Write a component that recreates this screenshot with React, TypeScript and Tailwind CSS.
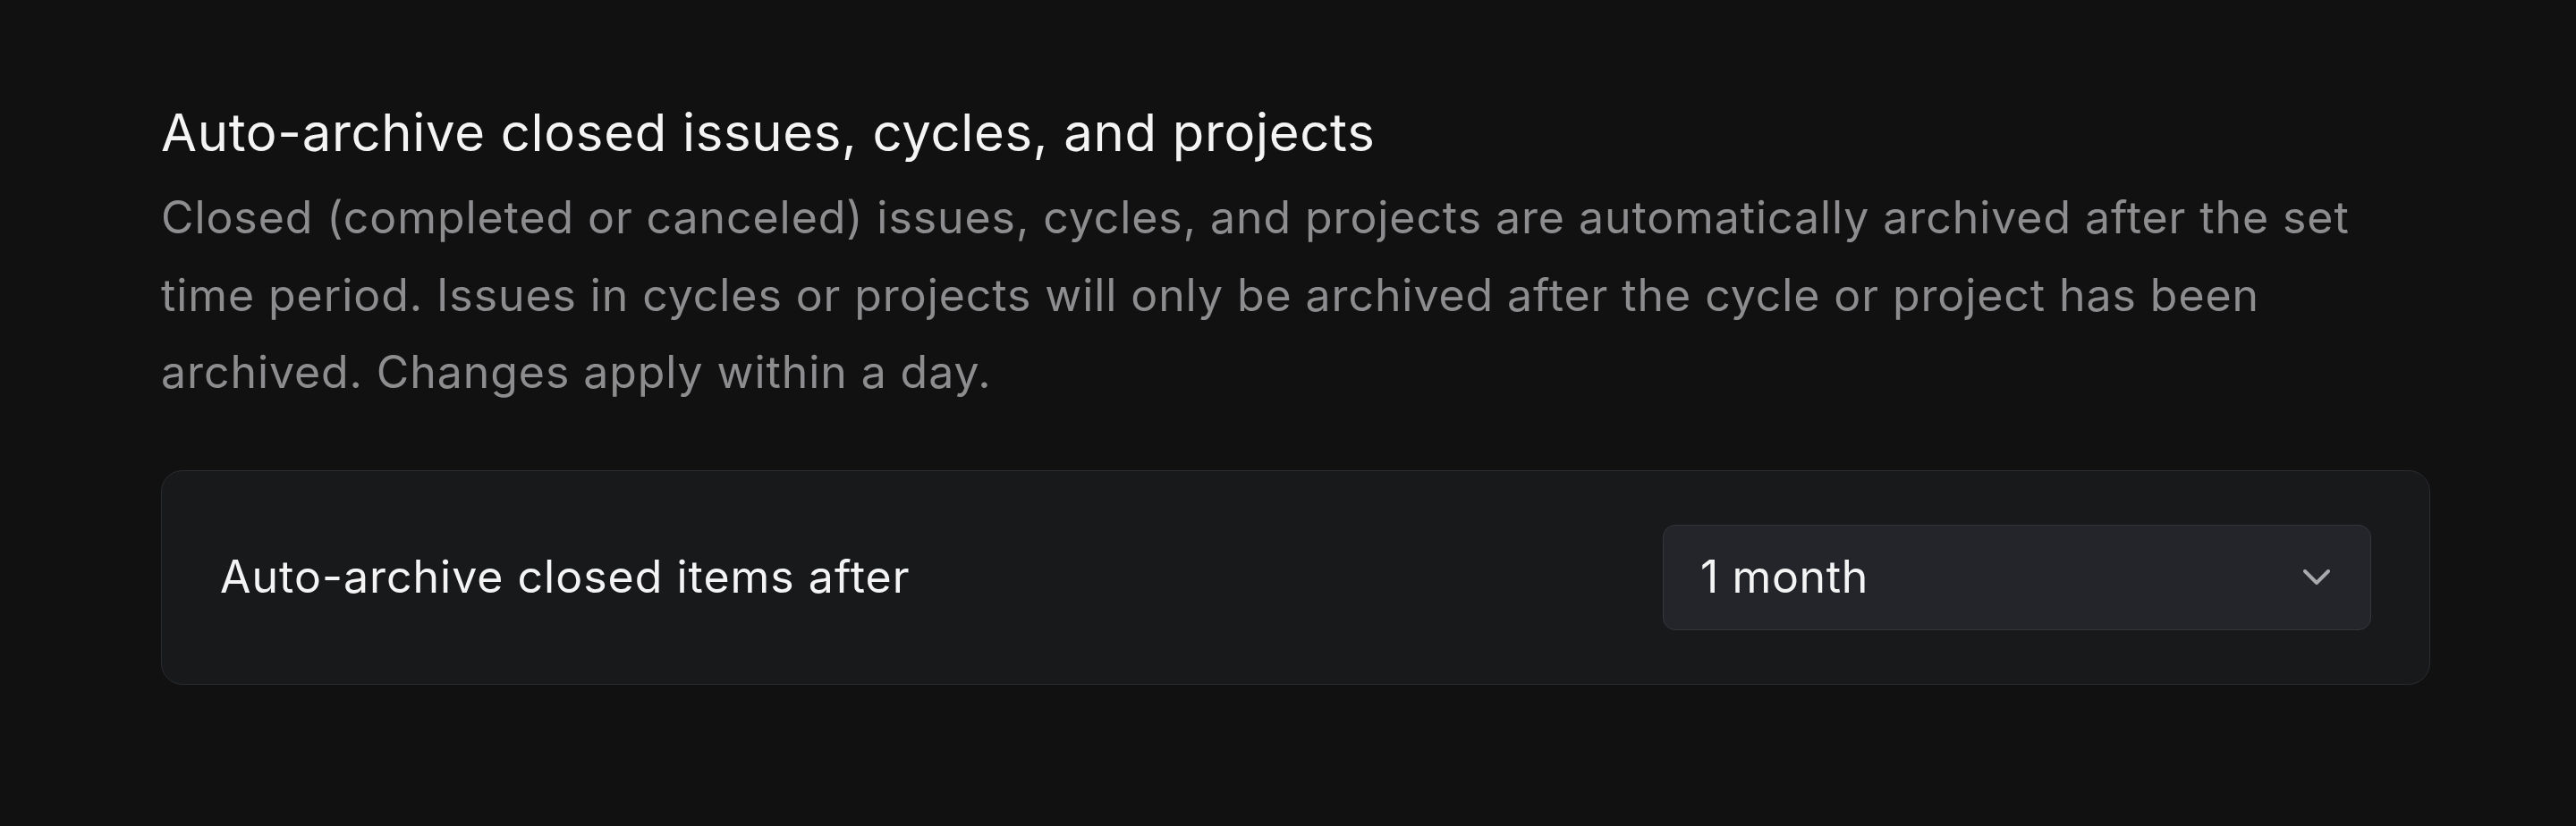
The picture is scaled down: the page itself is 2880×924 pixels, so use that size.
export default function App() {
  return (
    <div
      className="h-[924px] w-full bg-[#111111] pl-[180px] pt-[112px]"
      style={{ fontFamily: "Inter, 'Noto Sans', sans-serif" }}
    >
      <div className="w-[2537px]">
        <h1 className="text-[58px] leading-[72px] font-normal tracking-[0.7px] text-[#f4f4f5]">
          Auto-archive closed issues, cycles, and projects
        </h1>
        <p className="mt-4 text-[50px] leading-[86.5px] tracking-[0.92px] text-[#8d8d90]">
          Closed (completed or canceled) issues, cycles, and projects are automatically archived after the set time
          period. Issues in cycles or projects will only be archived after the cycle or project has been archived.
          Changes apply within a day.
        </p>

        <div className="mt-[66px] flex items-center justify-between rounded-[24px] border border-[#2b2c30] bg-[#18191b] px-[65px] py-[60px]">
          <span className="text-[50px] tracking-[1px] text-[#f4f4f5]">Auto-archive closed items after</span>
          <button
            type="button"
            className="flex h-[118px] w-[792px] items-center justify-between rounded-[14px] border border-[#34363c] bg-[#23252b] pl-[41px] pr-[45px] text-left"
          >
            <span className="text-[50px] tracking-[0.6px] text-[#f4f4f5]">1 month</span>
            <svg width="30" height="17" viewBox="0 0 30 17" fill="none">
              <path
                d="M2 2L15 15L28 2"
                stroke="#a9a9ac"
                strokeWidth="4"
                strokeLinecap="round"
                strokeLinejoin="round"
              />
            </svg>
          </button>
        </div>
      </div>
    </div>
  );
}
